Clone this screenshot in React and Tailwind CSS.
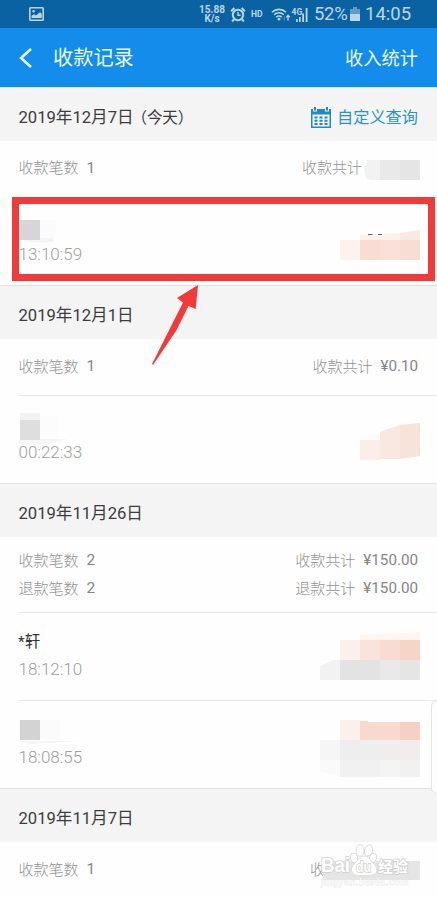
import React from 'react';

const Poly = ({ p, c }) => <polygon points={p} fill={c} />;
const Box = ({ x, y, w = 20, h = 20, c }) => (
  <rect x={x} y={y} width={w} height={h} fill={c} shapeRendering="crispEdges" />
);

function StatusBar() {
  return (
    <div className="flex h-7 shrink-0 items-center bg-[#0b62a2] text-[#b9d6ec]">
      <svg className="ml-[29px] block" width="15" height="14" viewBox="0 0 15 14">
        <rect x="0.8" y="0.8" width="13.4" height="12.4" rx="0.8" fill="none" stroke="currentColor" strokeWidth="1.6" />
        <path d="M2.5 11V8.8L5.2 7.2 7 8.6 11 5.2l1.7 1.6V11z" fill="currentColor" />
        <circle cx="4.6" cy="4.2" r="1.2" fill="currentColor" />
      </svg>
      <div className="ml-[155px] w-[26px] text-center text-[10px] leading-[9px] font-bold">
        <div>15.88</div>
        <div>K/s</div>
      </div>
      <svg className="ml-[5px] block" width="16" height="15" viewBox="0 0 15 15" fill="none" stroke="currentColor">
        <circle cx="7.5" cy="8" r="5.2" strokeWidth="2" />
        <path d="M7.5 5v3.3h2.7" strokeWidth="1.4" />
        <path d="M0.6 4.2 3.9 1.1M14.4 4.2 11.1 1.1M3.4 12.4 1.6 14.5M11.6 12.4l1.8 2.1" strokeWidth="2" />
      </svg>
      <span className="ml-[5px] w-[13px] text-[8.5px] leading-none font-bold">HD</span>
      <svg className="ml-[7px] block" width="20" height="16" viewBox="0 0 20 16" fill="none" stroke="currentColor">
        <path d="M1 6.2a10 10 0 0 1 14 0M3.2 8.7a6.8 6.8 0 0 1 9.6 0M5.3 11.1a3.8 3.8 0 0 1 5.4 0" strokeWidth="1.6" />
        <circle cx="8" cy="13.2" r="1.4" fill="currentColor" stroke="none" />
        <path d="M17 9.5v5M15.2 11.3 17 9.2l1.8 2.1" strokeWidth="1.3" />
        <path d="M13.3 10.5v4" strokeWidth="1" opacity="0.45" />
      </svg>
      <svg className="block" width="18" height="18" viewBox="0 0 18 18">
        <text x="0.5" y="9.5" fontSize="8.5" fontWeight="700" fontFamily="Roboto, sans-serif" fill="currentColor">4G</text>
        <path d="M5 14h1.7v3H5zM8 12h1.7v5H8zM11.2 8.5h1.8V17h-1.8zM14.7 3h1.8v14h-1.8z" fill="currentColor" />
      </svg>
      <span className="ml-[5px] w-[36px] text-[18.5px] leading-none tracking-[-0.3px] whitespace-nowrap">52%</span>
      <svg className="block" width="10" height="14" viewBox="0 0 10 14">
        <path d="M3 0h4v2h3v12H0V2h3z" fill="currentColor" opacity="0.5" />
        <path d="M0 7h10v7H0z" fill="currentColor" />
      </svg>
      <span className="ml-[5px] text-[18.5px] leading-none">14:05</span>
    </div>
  );
}

function NavBar() {
  return (
    <div className="flex h-[60px] shrink-0 items-center border-b border-[#c9f1ff] bg-[#148cec] text-[#e8fbff]">
      <svg className="ml-[18px] block" width="15" height="20" viewBox="0 0 15 20" fill="none" stroke="currentColor" strokeWidth="2.6">
        <path d="M13 1 3 10l10 9" />
      </svg>
      <span className="ml-5 pt-px text-[20.2px] leading-none">收款记录</span>
      <span className="mr-[19px] ml-auto pt-[3px] text-[18.3px] leading-none">收入统计</span>
    </div>
  );
}

function DateHeader({ date, note, first, children }) {
  return (
    <div
      className={
        'flex shrink-0 items-center justify-between bg-[#f4f4f4] pr-[19px] pl-[18.5px] text-[16.6px] leading-none text-[#3c3c3c] ' +
        (first ? 'h-[53px] pt-[7px]' : 'h-[54px] border-t border-[#e0e0e0] pt-2')
      }
    >
      <span className="whitespace-nowrap">
        {date}
        {note && <span className="ml-[-2px] text-[15.6px] tracking-[-0.2px]">{note}</span>}
      </span>
      {children}
    </div>
  );
}

function Calendar() {
  return (
    <svg className="block" width="20" height="21" viewBox="0 0 20 21">
      <path d="M0 2h2v2.5h4V2h8v2.5h4V2h2v19H0z" fill="#2288c8" />
      <path d="M3 0h2v3.5H3zM15 0h2v3.5h-2z" fill="#2288c8" />
      <path d="M1.5 7.5h17v12h-17z" fill="#eef8fd" />
      <path
        d="M3.5 9.5h3v2h-3zM8.5 9.5h3v2h-3zM13.5 9.5h3v2h-3zM3.5 12.7h3v2h-3zM8.5 12.7h3v2h-3zM13.5 12.7h3v2h-3zM3.5 16h3v2h-3zM8.5 16h3v2h-3zM13.5 16h3v2h-3z"
        fill="#2288c8"
      />
    </svg>
  );
}

function SummaryLine({ label, count, total, amount }) {
  return (
    <div className="flex h-7 items-center text-[15px] leading-none text-[#949494]">
      <span className="font-light">{label}</span>
      <span className="ml-2 text-[15.5px] text-[#868686]">{count}</span>
      <span className="ml-auto font-light">{total}</span>
      {amount && <span className="ml-2 text-[15.2px] text-[#868686]">{amount}</span>}
    </div>
  );
}

const Rule = () => <div className="ml-[18px] h-px shrink-0 bg-[#e9e9e9]" />;

// The two drawings share the vertical coordinate system of their row.
function Entry({ name, time, blur, amountBlur }) {
  return (
    <div className="flex h-[87px] shrink-0 items-start justify-between pr-[17px] pl-[18px]">
      <div className="flex flex-col">
        <div className="h-[41px]">
          {name ? (
            <div className="pt-[21px] text-[15.5px] leading-[16px] text-[#333]">{name}</div>
          ) : (
            <svg className="block overflow-visible" width="80" height="41" viewBox="0 0 80 41">{blur}</svg>
          )}
        </div>
        <div className="mt-[6px] pl-[0.5px] text-[17px] leading-[18px] font-light text-[#a0a0a0]">{time}</div>
      </div>
      <svg className="block" width="100" height="87" viewBox="0 0 100 87">{amountBlur}</svg>
    </div>
  );
}

function Watermark() {
  return (
    <svg className="absolute top-[840px] left-[316px] block" width="121" height="54" viewBox="316 840 121 54" fontFamily="'Liberation Sans', 'Noto Sans CJK SC', sans-serif">
      <path d="M323 861h97v19h-97z" fill="#e5e5e5" />
      <g fill="#fff" stroke="#d8d8d8" strokeWidth="0.9">
        <ellipse cx="354" cy="858" rx="3.6" ry="5" transform="rotate(-20 354 858)" />
        <ellipse cx="360" cy="850.5" rx="4" ry="5.8" />
        <ellipse cx="368.5" cy="850.5" rx="4" ry="5.8" transform="rotate(12 368.5 850.5)" />
        <ellipse cx="373" cy="858" rx="3.5" ry="4.8" transform="rotate(20 373 858)" />
        <path d="M364 856c-5 0-6 5-10 8-4 4-3 10 2 11 4 1 12 1 17 0 5-1 5-7 1-11-4-3-5-8-10-8z" />
      </g>
      <g fontWeight="700" paintOrder="stroke" stroke="#d0d0d0" strokeWidth="1.6" fill="#fff">
        <text x="321" y="872" fontSize="20" textLength="29" lengthAdjust="spacingAndGlyphs">Bai</text>
        <text x="356" y="871.5" fontSize="14" textLength="15" lengthAdjust="spacingAndGlyphs">du</text>
        <text x="378" y="872" fontSize="15" textLength="30">经验</text>
      </g>
      <text x="321" y="884.5" fontSize="9" textLength="87" fill="#fff" stroke="#e6e6e6" strokeWidth="0.8" paintOrder="stroke">jingyan.baidu.com</text>
    </svg>
  );
}

export default function App() {
  return (
    <div className="relative flex h-[898px] w-[437px] flex-col overflow-hidden bg-[#fefefe] font-['Roboto','Noto_Sans_CJK_SC',sans-serif]">
      <StatusBar />
      <NavBar />

      <DateHeader date="2019年12月7日" note="（今天）" first>
        <span className="flex items-center gap-1.5 text-[16.2px] text-[#2d93cc]">
          <span className="-mt-0.5">
            <Calendar />
          </span>
          自定义查询
        </span>
      </DateHeader>
      <div className="flex h-14 shrink-0 items-start pt-[13px] pr-[17px] pl-[18.5px] text-[15px] text-[#949494]">
        <div className="flex h-[29px] items-center leading-none">
          <span className="font-light">收款笔数</span>
          <span className="ml-2 text-[15.5px] text-[#868686]">1</span>
        </div>
        <div className="ml-auto flex h-[29px] items-center leading-none">
          <span className="font-light">收款共计</span>
          <svg className="mt-[3px] ml-0.5 block" width="56" height="20" viewBox="0 0 56 20">
            <path d="M16 0H3L0 9l2 9 4 2h10z" fill="#f2f2f2" />
            <Box x={16} y={0} c="#e9e9e9" />
            <Box x={36} y={0} c="#e5e5e5" />
          </svg>
        </div>
      </div>
      <Rule />
      <Entry
        time="13:10:59"
        blur={
          <>
            <path d="M1 41q15 6 35 2v-3H1z" fill="#f4f4f4" />
            <Box x={22} y={22} w={16} h={18} c="#fbfbfb" />
            <Box x={2} y={22} c="#d6d6d8" />
          </>
        }
        amountBlur={
          <>
            <Box x={20} y={42} c="#fcf2ee" />
            <Poly p="40,37 80,35 100,32 100,42 40,42" c="#fbf1ed" />
            <Poly p="80,35 100,32 100,42 80,42" c="#f8e9e4" />
            <Box x={40} y={42} c="#f9ddd4" />
            <Box x={60} y={42} c="#f9e0d9" />
            <Box x={80} y={42} c="#f8ddd4" />
            <path d="M48 36.5h4.5M58 36.5h4" stroke="#75584b" />
          </>
        }
      />

      <DateHeader date="2019年12月1日" />
      <div className="h-14 shrink-0 pt-[14px] pr-[19px] pl-[18.5px]">
        <SummaryLine label="收款笔数" count="1" total="收款共计" amount="¥0.10" />
      </div>
      <Rule />
      <Entry
        time="00:22:33"
        blur={
          <>
            <path d="M1 43h48l-18 5H1z" fill="#f6f6f6" />
            <Box x={2} y={17} h={7} c="#f3f3f3" />
            <Box x={22} y={20} w={17} h={22} c="#fcfcfc" />
            <Box x={2} y={24} c="#dedede" />
          </>
        }
        amountBlur={
          <>
            <Poly p="40,41 60,37 60,44 40,44" c="#fefaf8" />
            <Box x={40} y={44} c="#fbeeea" />
            <Poly p="60,36 80,29 80,63 60,63" c="#f9e7e1" />
            <Poly p="80,29 100,27 100,60 80,63" c="#f8e3db" />
          </>
        }
      />

      <DateHeader date="2019年11月26日" />
      <div className="h-[75px] shrink-0 pt-[10px] pr-[19px] pl-[18.5px]">
        <SummaryLine label="收款笔数" count="2" total="收款共计" amount="¥150.00" />
        <SummaryLine label="退款笔数" count="2" total="退款共计" amount="¥150.00" />
      </div>
      <Rule />
      <Entry
        name="*轩"
        time="18:12:10"
        amountBlur={
          <>
            <Poly p="40,22 100,19 100,27 40,27" c="#fdf5f2" />
            <Box x={20} y={27} c="#fbf0ec" />
            <Box x={40} y={27} c="#f8e4dd" />
            <Box x={60} y={27} c="#f8dbd2" />
            <Box x={80} y={27} c="#f6d5c9" />
            <Poly p="0,53 14,47 20,47 20,67 0,67" c="#f2f2f2" />
            <Box x={20} y={47} w={40} c="#e3e3e3" />
            <Box x={60} y={47} c="#e9e9e9" />
            <Box x={80} y={47} c="#e5e5e5" />
          </>
        }
      />
      <Rule />
      <Entry
        time="18:08:55"
        blur={
          <>
            <path d="M2 40h58l-46 3-12-2z" fill="#f4f4f4" />
            <Box x={22} y={19} w={20} h={20} c="#fbfbfb" />
            <Box x={2} y={19} c="#d3d3d3" />
          </>
        }
        amountBlur={
          <>
            <Box x={20} y={19} c="#fbf0ec" />
            <Poly p="40,20 48,20 48,21 100,21 100,39 40,39" c="#f7d9cf" />
            <Box x={80} y={21} h={18} c="#f5d0c5" />
            <Box x={0} y={39} c="#f6f6f6" />
            <Box x={20} y={39} w={40} c="#eeeeee" />
            <Box x={60} y={39} w={40} c="#f1eded" />
            <Poly p="0,59 20,59 20,75 0,71" c="#fafafa" />
            <Box x={20} y={59} w={40} h={17} c="#f1f1f1" />
            <Box x={60} y={59} h={17} c="#f4f4f4" />
            <Box x={80} y={59} h={17} c="#f1f1f1" />
          </>
        }
      />

      <DateHeader date="2019年11月7日" />
      <div className="h-14 shrink-0 pt-[14px] pr-[112px] pl-[18.5px]">
        <SummaryLine label="收款笔数" count="1" total="收" />
      </div>

      <div className="absolute top-[197px] left-[12px] h-[84px] w-[423px] border-7 border-[#f23a3a]" />
      <svg className="absolute top-[284px] left-[150px] block" width="50" height="82" viewBox="150 284 50 82">
        <path d="M198 285 195.7 309 188.5 306 176 331 153 365 152 364 183 302.5 177 298z" fill="#f23a3a" />
      </svg>
      <div className="absolute top-[700px] left-[431px] h-[94px] w-3 rounded-lg border border-[#e4e4e4] bg-[#fdfdfd]" />
      <Watermark />
    </div>
  );
}
